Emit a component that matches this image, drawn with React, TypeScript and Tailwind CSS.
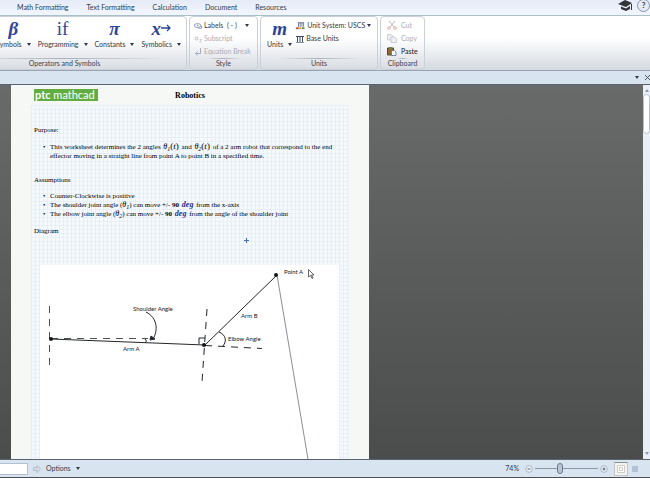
import type { ReactNode } from 'react';

const tabs = ['Math Formatting', 'Text Formatting', 'Calculation', 'Document', 'Resources'];

function Caret({ className = 'fill-[#333a45]' }: { className?: string }) {
  return (
    <svg viewBox="0 0 4 3" className={`h-[3px] w-1 shrink-0 ${className}`} aria-hidden="true">
      <path d="M0 0h4L2 3z" />
    </svg>
  );
}

function Group({ title, className = '', children }: { title: string; className?: string; children: ReactNode }) {
  return (
    <section
      className={`flex shrink-0 flex-col rounded-sm border border-[#c9d0d9] bg-linear-to-b from-white from-40% to-[#d9dde3] ${className}`}
    >
      <div className="flex flex-1 items-start">{children}</div>
      <div className="mx-4 h-px bg-linear-to-r from-transparent via-[#a9b0ba] to-transparent" />
      <h2 className="pb-px text-center leading-[9px] text-[#3d4450]">{title}</h2>
    </section>
  );
}

function BigButton({ glyph, label }: { glyph: ReactNode; label: string }) {
  return (
    <button className="flex flex-col items-center">
      <span className="flex h-[22px] items-center font-['Liberation_Serif',serif] text-[19px] leading-none text-[#2d4597]">
        {glyph}
      </span>
      <span className="flex items-center gap-[5px] leading-[10px]">
        {label}
        <Caret />
      </span>
    </button>
  );
}

function SmallButton({ icon, children, disabled }: { icon: ReactNode; children: ReactNode; disabled?: boolean }) {
  return (
    <button disabled={disabled} className="flex h-[13px] items-center gap-0.5 whitespace-nowrap disabled:text-[#a9adb3]">
      {icon}
      {children}
    </button>
  );
}

function Theta({ n }: { n: number }) {
  return (
    <i className="text-[8px] leading-none">
      θ<sub className="bottom-[-2px] text-[6px]">{n}</sub>
    </i>
  );
}

function ThetaOfT({ n }: { n: number }) {
  return (
    <span className="mx-px text-[9px] leading-none">
      <Theta n={n} />(<i>t</i>)
    </span>
  );
}

function Degrees() {
  return (
    <>
      <b>90</b> <b className="mx-px text-[8px] leading-none text-[#1d2f98] italic">deg</b>
    </>
  );
}

function Bullet({ children }: { children: ReactNode }) {
  return (
    <li className="before:-ml-[7px] before:inline-block before:w-[7px] before:content-['•']">{children}</li>
  );
}

function UnitsIcon() {
  return (
    <svg viewBox="0 0 8 8" className="size-2 shrink-0" fill="none" stroke="#3e4c6e">
      <path d="M0 1.5h8M1.5 2v5M4 2v5M6.5 2v5" />
      <path d="M0 7.5h8" strokeWidth=".6" />
    </svg>
  );
}

function Ribbon() {
  return (
    <div className="flex h-[55px] shrink-0 gap-0.5 overflow-hidden border-b border-[#9aa3b1] bg-linear-to-b from-white from-40% to-[#d5dae1]">
      <Group title="Operators and Symbols" className="-ml-[58px] w-[245px]">
        <div className="ml-auto flex gap-[7px] pr-[5px]">
          <BigButton glyph={<i className="font-bold">β</i>} label="Symbols" />
          <BigButton glyph="if" label="Programming" />
          <BigButton glyph={<i className="font-bold">π</i>} label="Constants" />
          <BigButton
            glyph={
              <>
                <i className="font-bold">x</i>
                <svg viewBox="0 0 10 8" className="h-2 w-2.5" fill="none" stroke="#2d4597" strokeWidth="1.3">
                  <path d="M0 4h9M6 1l3 3-3 3" />
                </svg>
              </>
            }
            label="Symbolics"
          />
        </div>
      </Group>

      <Group title="Style" className="w-[69px]">
        <div className="pt-0.5 pl-1">
          <SmallButton
            icon={
              <svg viewBox="0 0 9 8" className="h-2 w-2 shrink-0" fill="none" stroke="#7d90b5">
                <rect x=".5" y="1.5" width="7" height="4" rx="2" />
                <path d="M3 3.5h2M5 6.5h3.500v-3" />
              </svg>
            }
          >
            <span className="mr-1.5">Labels&nbsp; ( - )</span>
            <Caret />
          </SmallButton>
          <SmallButton
            disabled
            icon={
              <svg viewBox="0 0 8 8" className="size-2 shrink-0" fill="none" stroke="#b3bac6">
                <circle cx="2.500" cy="3.500" r="1.500" />
                <path d="M5.500 4.500h2l-2 2.500h2" strokeWidth=".7" />
              </svg>
            }
          >
            Subscript
          </SmallButton>
          <SmallButton
            disabled
            icon={
              <svg viewBox="0 0 8 8" className="size-2 shrink-0" fill="none" stroke="#a6aebb">
                <path d="M6.500 0v5.500H1.500M3.500 3.500l-2 2 2 2" />
              </svg>
            }
          >
            Equation Break
          </SmallButton>
        </div>
      </Group>

      <Group title="Units" className="w-[118px]">
        <div className="flex pl-1.5">
          <BigButton glyph={<i className="font-bold">m</i>} label="Units" />
          <div className="pt-0.5 pl-1">
            <SmallButton
              icon={
                <svg viewBox="0 0 10 8" className="h-2 w-[9px] shrink-0" fill="none">
                  <path d="M2 .5h7M3 1v4M5.500 1v4M8 1v4" stroke="#3e4c6e" />
                  <path d="M0 6.500h3" stroke="#c14a35" strokeWidth="2" />
                  <path d="M3 6.500h3" stroke="#d8a531" strokeWidth="2" />
                  <path d="M6.500 6.500h3" stroke="#57904b" strokeWidth="2" />
                </svg>
              }
            >
              <span>Unit System: USCS</span>
              <Caret />
            </SmallButton>
            <SmallButton icon={<UnitsIcon />}>Base Units</SmallButton>
          </div>
        </div>
      </Group>

      <Group title="Clipboard" className="w-[45px]">
        <div className="pt-0.5 pl-1.5">
          <SmallButton
            disabled
            icon={
              <svg viewBox="0 0 10 9" className="mr-0.5 h-[9px] w-2.5" fill="none" stroke="#b9bcc4">
                <path d="M2 0l5 6M8 0L3 6" />
                <circle cx="2" cy="7" r="1.300" stroke="#e0b3a6" />
                <circle cx="8" cy="7" r="1.300" stroke="#e0b3a6" />
              </svg>
            }
          >
            Cut
          </SmallButton>
          <SmallButton
            disabled
            icon={
              <svg viewBox="0 0 10 9" className="mr-0.5 h-[9px] w-2.5" fill="#eceef1" stroke="#c3c7ce" strokeWidth=".8">
                <path d="M.5.500h4l1.500 1.500v4H.5z" />
                <path d="M4 3h3.500L9.500 4.500v4H4z" />
              </svg>
            }
          >
            Copy
          </SmallButton>
          <SmallButton
            icon={
              <svg viewBox="0 0 10 9" className="mr-0.5 h-[9px] w-2.5">
                <path d="M.5 1h6v7h-6z" fill="#8a6a35" stroke="#5a4a33" />
                <path d="M2 0h3v2H2z" fill="#5f8a4d" />
                <path d="M1 3h2v2H1z" fill="#c3562f" />
                <path d="M4.500 3.500h3l1.500 1.500v3.500H4.500z" fill="#fff" stroke="#5d6e95" strokeWidth=".8" />
              </svg>
            }
          >
            <span className="text-[#15181d]">Paste</span>
          </SmallButton>
        </div>
      </Group>
    </div>
  );
}

function Diagram() {
  return (
    <svg
      viewBox="0 0 299 240"
      className="h-[240px] w-[299px] bg-white font-['Lato','Noto_Sans',sans-serif] text-[6px]"
      fill="none"
      stroke="#22252a"
    >
      <path d="M9.500 41v60" strokeDasharray="7 6" strokeWidth=".8" />
      <path d="M11 73.500h97" strokeDasharray="7 6" strokeWidth=".8" />
      <path d="M11 74l154 6M165 80l72-70" />
      <path d="M167 44l-5 73" strokeDasharray="7 6" />
      <path d="M165 80.500l57 3" strokeDasharray="7 6" />
      <path d="M237 10l32 190" stroke="#8b8e94" />
      <path d="M159 79v-6h6" />
      <path d="M105 74q3 2 0 4" />
      <path d="M106 47c12 6 12 19 7 27" />
      <path d="M110 75l1-4 4 3z" fill="#22252a" />
      <path d="M179 67c7 3 8 9 4 14" />
      <g fill="#15171a" stroke="none">
        <circle cx="11" cy="74" r="2" />
        <circle cx="164" cy="80" r="2" />
        <circle cx="236" cy="10" r="2" />
        <text x="93" y="46">Shoulder Angle</text>
        <text x="83" y="86">Arm A</text>
        <text x="201" y="53">Arm B</text>
        <text x="188" y="76">Elbow Angle</text>
        <text x="244" y="9">Point A</text>
      </g>
      <path d="M268.500 4.500v7.500l2-1.500 1.500 3 1-.5-1.500-3h2.500z" fill="#fff" strokeWidth=".7" />
    </svg>
  );
}

function Worksheet() {
  return (
    <article className="ml-[11px] h-full w-[358px] shrink-0 overflow-hidden bg-[#f6f8f6] px-5 font-['Liberation_Serif',serif] text-[7px] leading-[9px] text-black">
      <header className="grid h-5 grid-cols-[1fr_auto_1fr] items-center px-[3px]">
        <div className="w-16 bg-[#62ad41] pl-px font-['Lato',sans-serif] text-[11px] leading-3 whitespace-nowrap text-white">
          <b>ptc</b> mathcad
        </div>
        <h1 className="text-[8px] font-bold">Robotics</h1>
      </header>

      <div className="relative bg-[#f6fafc] bg-[linear-gradient(to_right,#e4eff9_1px,transparent_1px),linear-gradient(to_bottom,#e4eff9_1px,transparent_1px)] bg-size-[4px_4px] px-[3px] pt-[21px]">
        <p>Purpose:</p>
        <ul className="mt-[7px] pl-4">
          <Bullet>
            This worksheet determines the 2 angles <ThetaOfT n={1} /> and <ThetaOfT n={2} /> of a 2 arm robot that
            correspond to the end
            <br />
            effector moving in a straight line from point A to point B in a specified time.
          </Bullet>
        </ul>
        <p className="mt-[15px]">Assumptions</p>
        <ul className="mt-[7px] pl-4">
          <Bullet>Counter-Clockwise is positive</Bullet>
          <Bullet>
            The shoulder joint angle (<Theta n={1} />) can move +/- <Degrees /> from the x-axis
          </Bullet>
          <Bullet>
            The elbow joint angle (<Theta n={2} />) can move +/- <Degrees /> from the angle of the shoulder joint
          </Bullet>
        </ul>
        <p className="mt-2 mb-[29px]">Diagram</p>
        <div className="pl-1.5">
          <Diagram />
        </div>
        <svg viewBox="0 0 5 5" className="absolute top-[133px] left-[213px] size-[5px]" stroke="#4a6ea8">
          <path d="M2.500 0v5M0 2.500h5" />
        </svg>
      </div>
    </article>
  );
}

function StatusBar() {
  return (
    <footer className="flex h-[18px] shrink-0 items-center border-b border-[#4b4d50] bg-[#d9e4f1]">
      <input aria-label="Find" className="h-3 w-7 border border-l-0 border-[#b3c0d2] bg-white" />
      <svg viewBox="0 0 8 8" className="ml-[5px] size-2" fill="#d5dbe4" stroke="#a9b3c2" strokeWidth=".8">
        <path d="M.5 2.500H4V.5L7.500 4 4 7.500v-2H.5z" />
      </svg>
      <button className="ml-[5px] flex items-center gap-[5px]">
        Options
        <Caret />
      </button>
      <span className="mr-1.5 ml-auto">74%</span>
      <button aria-label="Zoom out">
        <svg viewBox="0 0 8 8" className="size-2" fill="#eef3fa" stroke="#9aa9c0" strokeWidth=".8">
          <circle cx="4" cy="4" r="3.300" />
          <path d="M2.500 4h3" stroke="#33415e" />
        </svg>
      </button>
      <input
        type="range"
        aria-label="Zoom"
        defaultValue={38}
        className="mx-0.5 h-3 w-[63px] appearance-none bg-transparent [&::-webkit-slider-runnable-track]:h-px [&::-webkit-slider-runnable-track]:bg-[#8d99ab] [&::-webkit-slider-thumb]:-mt-[5px] [&::-webkit-slider-thumb]:h-[11px] [&::-webkit-slider-thumb]:w-1.5 [&::-webkit-slider-thumb]:appearance-none [&::-webkit-slider-thumb]:rounded-sm [&::-webkit-slider-thumb]:border [&::-webkit-slider-thumb]:border-[#6c788c] [&::-webkit-slider-thumb]:bg-[#b8c4d6]"
      />
      <button aria-label="Zoom in">
        <svg viewBox="0 0 8 8" className="size-2" fill="#eef3fa" stroke="#9aa9c0" strokeWidth=".8">
          <circle cx="4" cy="4" r="3.300" />
          <path d="M2.500 4h3M4 2.500v3" stroke="#33415e" />
        </svg>
      </button>
      <button aria-label="Page view" className="ml-1.5 border border-[#c6c7ca] border-t-[#8c929c] bg-[#f3f2f1] p-0.5">
        <svg viewBox="0 0 8 8" className="size-2" fill="#fff" stroke="#cfccc8">
          <path d="M.5.500h7v7h-7zM2.500 2.500h3v3h-3z" />
        </svg>
      </button>
      <button aria-label="Draft view" className="mr-[11px] ml-[3px]">
        <svg viewBox="0 0 8 8" className="size-2" fill="#b5c2d6">
          <path d="M1 1h6v6H1z" />
        </svg>
      </button>
    </footer>
  );
}

export default function App() {
  return (
    <div className="flex h-screen flex-col overflow-hidden bg-[#d9e4f1] font-['Lato','Noto_Sans',sans-serif] text-[7px] text-[#333a45]">
      <nav className="flex h-4 shrink-0 items-center gap-[18px] border-b border-[#a9c0c6] bg-linear-to-b from-[#e6ebf8] to-[#f1f6fd] pl-[17px]">
        {tabs.map((tab) => (
          <button key={tab}>{tab}</button>
        ))}
        <div className="ml-auto flex items-center gap-1 pb-[5px]">
          <svg viewBox="0 0 15 11" className="h-[11px] w-[15px]" fill="#303338">
            <path d="M0 4l7-4 7 3-6 4z" />
            <path d="M3 6.500l5 2 4-2.500v3L8 11 3 9z" />
            <path d="M13 4h1v6h-1z" />
          </svg>
          <button
            aria-label="Help"
            className="size-[13px] rounded-full border border-[#8796ae] bg-[#e4ebf5] text-[8px] leading-[11px] font-bold"
          >
            ?
          </button>
        </div>
      </nav>
      <Ribbon />
      <div className="flex h-[13px] shrink-0 items-center justify-end gap-1.5">
        <Caret />
        <button aria-label="Close">
          <svg viewBox="0 0 5 5" className="size-[5px]" stroke="#333a45" strokeWidth=".8">
            <path d="M0 0l5 5M5 0L0 5" />
          </svg>
        </button>
      </div>
      <main className="flex min-h-0 flex-1 border-y border-[#5c626b] bg-linear-to-b from-[#696b6b] to-[#4b4d4c]">
        <Worksheet />
        <div className="ml-auto flex w-[7px] shrink-0 flex-col items-center bg-[#e9eff7] py-1">
          <Caret className="rotate-180 fill-[#8c9bb3]" />
          <button aria-label="Scroll" className="mt-0.5 h-10 w-full rounded-sm border border-[#b4c2d7] bg-white" />
          <Caret className="mt-auto fill-[#8c9bb3]" />
        </div>
      </main>
      <StatusBar />
    </div>
  );
}
